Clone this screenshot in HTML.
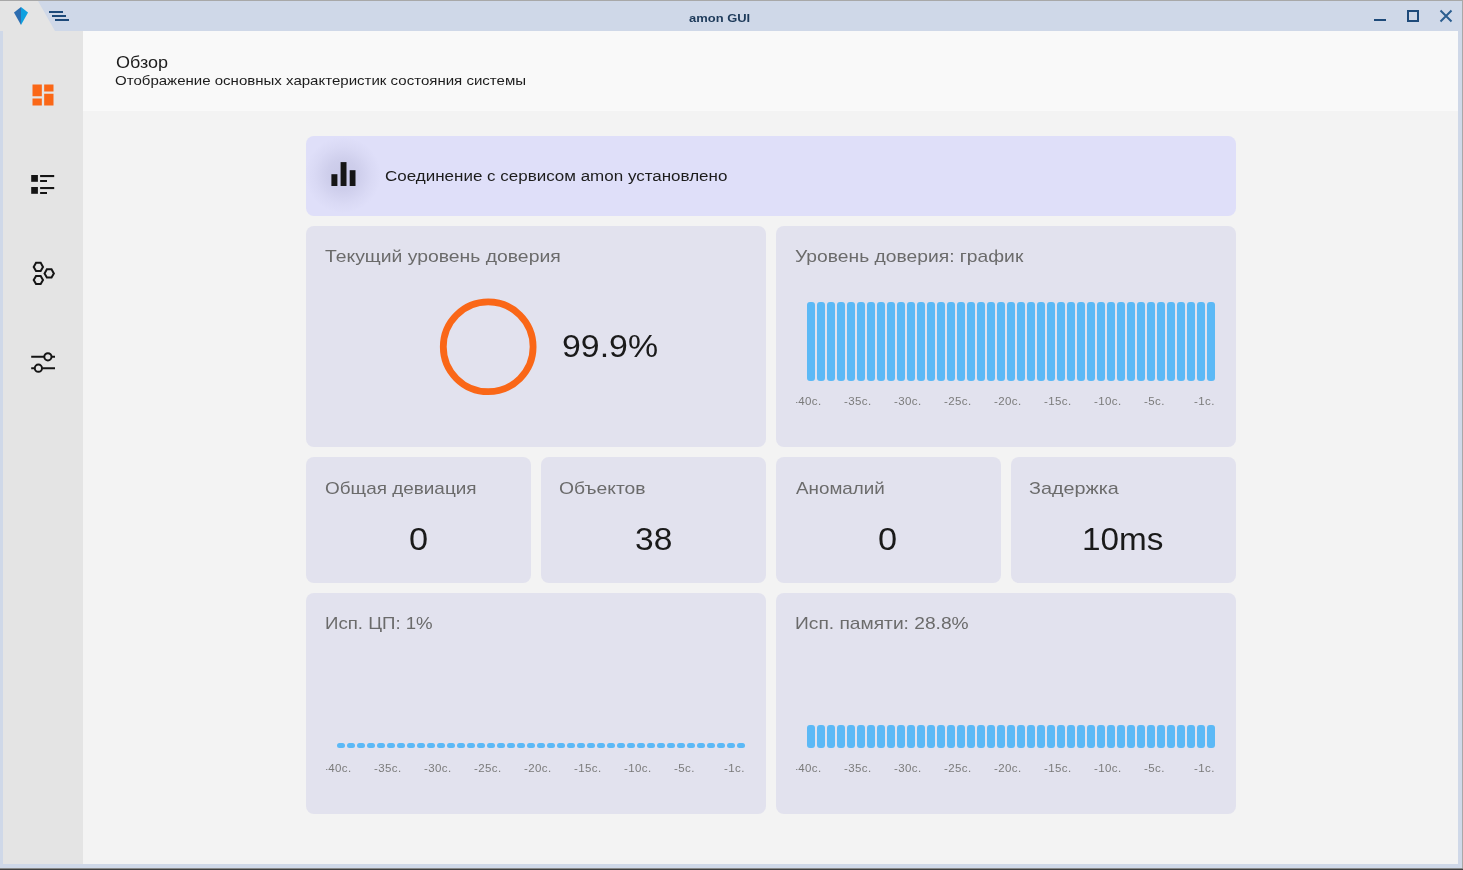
<!DOCTYPE html>
<html><head><meta charset="utf-8"><style>
*{margin:0;padding:0;box-sizing:border-box}
html,body{width:1463px;height:870px;overflow:hidden;background:#f3f3f3;font-family:"Liberation Sans",sans-serif}
.a{position:absolute}
.t{position:absolute;white-space:nowrap;transform-origin:0 0;will-change:transform}
.ax{position:absolute;white-space:nowrap;will-change:transform;font-size:11.5px;line-height:11.5px;letter-spacing:0.4px;color:#7a7a7a}
.bar{position:absolute;width:8px;background:#5cb9f6}
.card{position:absolute;background:#e2e2ee;border-radius:8px}
</style></head><body>
<!-- frame -->
<div class="a" style="left:0;top:0;width:1463px;height:870px;background:#cfd8e8"></div>
<div class="a" style="left:0;top:0;width:1463px;height:1px;background:#a8a8a8"></div>
<div class="a" style="left:1462px;top:0;width:1px;height:870px;background:#a8a8a8"></div>
<div class="a" style="left:0;top:868px;width:1463px;height:1px;background:#8a8a8a"></div>
<div class="a" style="left:0;top:869px;width:1463px;height:1px;background:#404040"></div>
<svg class="a" style="left:0;top:1px" width="70" height="30" viewBox="0 0 70 30">
 <polygon points="0,0 38,0 55,30 0,30" fill="#e4e4e4"/>
 <polygon points="21,6 14,11.5 21,24" fill="#2c6db0"/>
 <polygon points="21,6 28,11.5 21,24" fill="#0ea0e0"/>
 <rect x="49" y="10" width="14" height="2" fill="#1e4a7a"/>
 <rect x="52" y="14" width="14" height="2" fill="#1e4a7a"/>
 <rect x="55" y="18" width="14" height="2" fill="#1e4a7a"/>
</svg>
<svg class="a" style="left:1370px;top:5px" width="90" height="24" viewBox="0 0 90 24">
 <rect x="4" y="14" width="12" height="2" fill="#1e4a7a"/>
 <rect x="38" y="6" width="10" height="10" fill="none" stroke="#1e4a7a" stroke-width="2"/>
 <path d="M70.5 5.5 L81.5 16.5 M81.5 5.5 L70.5 16.5" stroke="#2a5d8f" stroke-width="2"/>
</svg>
<!-- sidebar -->
<div class="a" style="left:3px;top:31px;width:80px;height:833px;background:#e4e4e4"></div>
<!-- header -->
<div class="a" style="left:83px;top:31px;width:1375px;height:80px;background:#f9f9f9"></div>
<div class="a" style="left:83px;top:111px;width:1375px;height:753px;background:#f3f3f3"></div>
<!-- sidebar icons -->
<svg class="a" style="left:29px;top:81.4px" width="28" height="28" viewBox="0 0 24 24"><path fill="#fa6717" d="M3 13h8V3H3v10zm0 8h8v-6H3v6zm10 0h8V11h-8v10zm0-18v6h8V3h-8z"/></svg>
<svg class="a" style="left:20px;top:160px" width="50" height="50" viewBox="0 0 50 50" fill="#141414">
 <rect x="11.2" y="15" width="6.7" height="6.8"/><rect x="20.1" y="15" width="14.1" height="2.1"/><rect x="20.1" y="20" width="6.9" height="2"/>
 <rect x="11.2" y="27" width="6.7" height="6.8"/><rect x="20.1" y="27" width="14.1" height="2.1"/><rect x="20.1" y="32" width="6.9" height="2"/>
</svg>
<svg class="a" style="left:20px;top:250px" width="50" height="50" viewBox="0 0 50 50" fill="none" stroke="#141414" stroke-width="2">
 <polygon points="16.03,12.87 20.68,12.87 23.00,16.90 20.68,20.93 16.03,20.93 13.70,16.90"/>
 <polygon points="26.88,19.37 31.52,19.37 33.85,23.40 31.52,27.43 26.88,27.43 24.55,23.40"/>
 <polygon points="16.03,25.97 20.68,25.97 23.00,30.00 20.68,34.03 16.03,34.03 13.70,30.00"/>
</svg>
<svg class="a" style="left:20px;top:340px" width="50" height="50" viewBox="0 0 50 50" fill="none" stroke="#141414" stroke-width="2">
 <path d="M11.2 16.8 H24 M32 16.8 H35"/><circle cx="27.9" cy="16.8" r="3.6"/>
 <path d="M11.2 28.2 H14.5 M22.4 28.2 H35"/><circle cx="18.4" cy="28.2" r="3.6"/>
</svg>
<!-- banner -->
<div class="a" style="left:306px;top:136px;width:930px;height:80px;background:#dfdff9;border-radius:8px;overflow:hidden">
 <div class="a" style="left:-0.6px;top:1.4px;width:76px;height:76px;border-radius:50%;background:radial-gradient(circle closest-side, rgba(168,168,205,0.4) 0%, rgba(168,168,205,0.3) 40%, rgba(168,168,205,0.1) 75%, rgba(168,168,205,0) 100%)"></div>
</div>
<svg class="a" style="left:330px;top:160px" width="28" height="28" viewBox="0 0 28 28" fill="#161616">
 <rect x="1.4" y="14.2" width="6" height="11.8"/><rect x="10.6" y="2.1" width="5.9" height="23.9"/><rect x="19.7" y="10.2" width="5.8" height="15.8"/>
</svg>
<!-- cards -->
<div class="card" style="left:306px;top:226px;width:460px;height:221px"></div>
<div class="card" style="left:776px;top:226px;width:460px;height:221px"></div>
<div class="card" style="left:306px;top:457px;width:225px;height:126px"></div>
<div class="card" style="left:541px;top:457px;width:225px;height:126px"></div>
<div class="card" style="left:776px;top:457px;width:225px;height:126px"></div>
<div class="card" style="left:1011px;top:457px;width:225px;height:126px"></div>
<div class="card" style="left:306px;top:593px;width:460px;height:221px"></div>
<div class="card" style="left:776px;top:593px;width:460px;height:221px"></div>
<!-- ring -->
<svg class="a" style="left:430px;top:289px" width="116" height="116" viewBox="0 0 116 116"><circle cx="58.2" cy="57.8" r="44.9" fill="none" stroke="#fa6717" stroke-width="6.8"/></svg>
<!-- bars -->
<div class="bar" style="left:807px;top:302px;height:79px;border-radius:3px"></div><div class="bar" style="left:817px;top:302px;height:79px;border-radius:3px"></div><div class="bar" style="left:827px;top:302px;height:79px;border-radius:3px"></div><div class="bar" style="left:837px;top:302px;height:79px;border-radius:3px"></div><div class="bar" style="left:847px;top:302px;height:79px;border-radius:3px"></div><div class="bar" style="left:857px;top:302px;height:79px;border-radius:3px"></div><div class="bar" style="left:867px;top:302px;height:79px;border-radius:3px"></div><div class="bar" style="left:877px;top:302px;height:79px;border-radius:3px"></div><div class="bar" style="left:887px;top:302px;height:79px;border-radius:3px"></div><div class="bar" style="left:897px;top:302px;height:79px;border-radius:3px"></div><div class="bar" style="left:907px;top:302px;height:79px;border-radius:3px"></div><div class="bar" style="left:917px;top:302px;height:79px;border-radius:3px"></div><div class="bar" style="left:927px;top:302px;height:79px;border-radius:3px"></div><div class="bar" style="left:937px;top:302px;height:79px;border-radius:3px"></div><div class="bar" style="left:947px;top:302px;height:79px;border-radius:3px"></div><div class="bar" style="left:957px;top:302px;height:79px;border-radius:3px"></div><div class="bar" style="left:967px;top:302px;height:79px;border-radius:3px"></div><div class="bar" style="left:977px;top:302px;height:79px;border-radius:3px"></div><div class="bar" style="left:987px;top:302px;height:79px;border-radius:3px"></div><div class="bar" style="left:997px;top:302px;height:79px;border-radius:3px"></div><div class="bar" style="left:1007px;top:302px;height:79px;border-radius:3px"></div><div class="bar" style="left:1017px;top:302px;height:79px;border-radius:3px"></div><div class="bar" style="left:1027px;top:302px;height:79px;border-radius:3px"></div><div class="bar" style="left:1037px;top:302px;height:79px;border-radius:3px"></div><div class="bar" style="left:1047px;top:302px;height:79px;border-radius:3px"></div><div class="bar" style="left:1057px;top:302px;height:79px;border-radius:3px"></div><div class="bar" style="left:1067px;top:302px;height:79px;border-radius:3px"></div><div class="bar" style="left:1077px;top:302px;height:79px;border-radius:3px"></div><div class="bar" style="left:1087px;top:302px;height:79px;border-radius:3px"></div><div class="bar" style="left:1097px;top:302px;height:79px;border-radius:3px"></div><div class="bar" style="left:1107px;top:302px;height:79px;border-radius:3px"></div><div class="bar" style="left:1117px;top:302px;height:79px;border-radius:3px"></div><div class="bar" style="left:1127px;top:302px;height:79px;border-radius:3px"></div><div class="bar" style="left:1137px;top:302px;height:79px;border-radius:3px"></div><div class="bar" style="left:1147px;top:302px;height:79px;border-radius:3px"></div><div class="bar" style="left:1157px;top:302px;height:79px;border-radius:3px"></div><div class="bar" style="left:1167px;top:302px;height:79px;border-radius:3px"></div><div class="bar" style="left:1177px;top:302px;height:79px;border-radius:3px"></div><div class="bar" style="left:1187px;top:302px;height:79px;border-radius:3px"></div><div class="bar" style="left:1197px;top:302px;height:79px;border-radius:3px"></div><div class="bar" style="left:1207px;top:302px;height:79px;border-radius:3px"></div>
<div class="bar" style="left:807px;top:725px;height:23px;border-radius:3px"></div><div class="bar" style="left:817px;top:725px;height:23px;border-radius:3px"></div><div class="bar" style="left:827px;top:725px;height:23px;border-radius:3px"></div><div class="bar" style="left:837px;top:725px;height:23px;border-radius:3px"></div><div class="bar" style="left:847px;top:725px;height:23px;border-radius:3px"></div><div class="bar" style="left:857px;top:725px;height:23px;border-radius:3px"></div><div class="bar" style="left:867px;top:725px;height:23px;border-radius:3px"></div><div class="bar" style="left:877px;top:725px;height:23px;border-radius:3px"></div><div class="bar" style="left:887px;top:725px;height:23px;border-radius:3px"></div><div class="bar" style="left:897px;top:725px;height:23px;border-radius:3px"></div><div class="bar" style="left:907px;top:725px;height:23px;border-radius:3px"></div><div class="bar" style="left:917px;top:725px;height:23px;border-radius:3px"></div><div class="bar" style="left:927px;top:725px;height:23px;border-radius:3px"></div><div class="bar" style="left:937px;top:725px;height:23px;border-radius:3px"></div><div class="bar" style="left:947px;top:725px;height:23px;border-radius:3px"></div><div class="bar" style="left:957px;top:725px;height:23px;border-radius:3px"></div><div class="bar" style="left:967px;top:725px;height:23px;border-radius:3px"></div><div class="bar" style="left:977px;top:725px;height:23px;border-radius:3px"></div><div class="bar" style="left:987px;top:725px;height:23px;border-radius:3px"></div><div class="bar" style="left:997px;top:725px;height:23px;border-radius:3px"></div><div class="bar" style="left:1007px;top:725px;height:23px;border-radius:3px"></div><div class="bar" style="left:1017px;top:725px;height:23px;border-radius:3px"></div><div class="bar" style="left:1027px;top:725px;height:23px;border-radius:3px"></div><div class="bar" style="left:1037px;top:725px;height:23px;border-radius:3px"></div><div class="bar" style="left:1047px;top:725px;height:23px;border-radius:3px"></div><div class="bar" style="left:1057px;top:725px;height:23px;border-radius:3px"></div><div class="bar" style="left:1067px;top:725px;height:23px;border-radius:3px"></div><div class="bar" style="left:1077px;top:725px;height:23px;border-radius:3px"></div><div class="bar" style="left:1087px;top:725px;height:23px;border-radius:3px"></div><div class="bar" style="left:1097px;top:725px;height:23px;border-radius:3px"></div><div class="bar" style="left:1107px;top:725px;height:23px;border-radius:3px"></div><div class="bar" style="left:1117px;top:725px;height:23px;border-radius:3px"></div><div class="bar" style="left:1127px;top:725px;height:23px;border-radius:3px"></div><div class="bar" style="left:1137px;top:725px;height:23px;border-radius:3px"></div><div class="bar" style="left:1147px;top:725px;height:23px;border-radius:3px"></div><div class="bar" style="left:1157px;top:725px;height:23px;border-radius:3px"></div><div class="bar" style="left:1167px;top:725px;height:23px;border-radius:3px"></div><div class="bar" style="left:1177px;top:725px;height:23px;border-radius:3px"></div><div class="bar" style="left:1187px;top:725px;height:23px;border-radius:3px"></div><div class="bar" style="left:1197px;top:725px;height:23px;border-radius:3px"></div><div class="bar" style="left:1207px;top:725px;height:23px;border-radius:3px"></div>
<div class="bar" style="left:337px;top:743px;height:5px;border-radius:2.5px"></div><div class="bar" style="left:347px;top:743px;height:5px;border-radius:2.5px"></div><div class="bar" style="left:357px;top:743px;height:5px;border-radius:2.5px"></div><div class="bar" style="left:367px;top:743px;height:5px;border-radius:2.5px"></div><div class="bar" style="left:377px;top:743px;height:5px;border-radius:2.5px"></div><div class="bar" style="left:387px;top:743px;height:5px;border-radius:2.5px"></div><div class="bar" style="left:397px;top:743px;height:5px;border-radius:2.5px"></div><div class="bar" style="left:407px;top:743px;height:5px;border-radius:2.5px"></div><div class="bar" style="left:417px;top:743px;height:5px;border-radius:2.5px"></div><div class="bar" style="left:427px;top:743px;height:5px;border-radius:2.5px"></div><div class="bar" style="left:437px;top:743px;height:5px;border-radius:2.5px"></div><div class="bar" style="left:447px;top:743px;height:5px;border-radius:2.5px"></div><div class="bar" style="left:457px;top:743px;height:5px;border-radius:2.5px"></div><div class="bar" style="left:467px;top:743px;height:5px;border-radius:2.5px"></div><div class="bar" style="left:477px;top:743px;height:5px;border-radius:2.5px"></div><div class="bar" style="left:487px;top:743px;height:5px;border-radius:2.5px"></div><div class="bar" style="left:497px;top:743px;height:5px;border-radius:2.5px"></div><div class="bar" style="left:507px;top:743px;height:5px;border-radius:2.5px"></div><div class="bar" style="left:517px;top:743px;height:5px;border-radius:2.5px"></div><div class="bar" style="left:527px;top:743px;height:5px;border-radius:2.5px"></div><div class="bar" style="left:537px;top:743px;height:5px;border-radius:2.5px"></div><div class="bar" style="left:547px;top:743px;height:5px;border-radius:2.5px"></div><div class="bar" style="left:557px;top:743px;height:5px;border-radius:2.5px"></div><div class="bar" style="left:567px;top:743px;height:5px;border-radius:2.5px"></div><div class="bar" style="left:577px;top:743px;height:5px;border-radius:2.5px"></div><div class="bar" style="left:587px;top:743px;height:5px;border-radius:2.5px"></div><div class="bar" style="left:597px;top:743px;height:5px;border-radius:2.5px"></div><div class="bar" style="left:607px;top:743px;height:5px;border-radius:2.5px"></div><div class="bar" style="left:617px;top:743px;height:5px;border-radius:2.5px"></div><div class="bar" style="left:627px;top:743px;height:5px;border-radius:2.5px"></div><div class="bar" style="left:637px;top:743px;height:5px;border-radius:2.5px"></div><div class="bar" style="left:647px;top:743px;height:5px;border-radius:2.5px"></div><div class="bar" style="left:657px;top:743px;height:5px;border-radius:2.5px"></div><div class="bar" style="left:667px;top:743px;height:5px;border-radius:2.5px"></div><div class="bar" style="left:677px;top:743px;height:5px;border-radius:2.5px"></div><div class="bar" style="left:687px;top:743px;height:5px;border-radius:2.5px"></div><div class="bar" style="left:697px;top:743px;height:5px;border-radius:2.5px"></div><div class="bar" style="left:707px;top:743px;height:5px;border-radius:2.5px"></div><div class="bar" style="left:717px;top:743px;height:5px;border-radius:2.5px"></div><div class="bar" style="left:727px;top:743px;height:5px;border-radius:2.5px"></div><div class="bar" style="left:737px;top:743px;height:5px;border-radius:2.5px"></div>
<!-- axis labels -->
<div class="a" style="left:796px;top:385px;width:440px;height:30px;overflow:hidden"><div class="a" style="left:-796px;top:-385px"><div class="ax" style="left:794.00px;top:396.00px">-40с.</div><div class="ax" style="left:844.00px;top:396.00px">-35с.</div><div class="ax" style="left:894.00px;top:396.00px">-30с.</div><div class="ax" style="left:944.00px;top:396.00px">-25с.</div><div class="ax" style="left:994.00px;top:396.00px">-20с.</div><div class="ax" style="left:1044.00px;top:396.00px">-15с.</div><div class="ax" style="left:1094.00px;top:396.00px">-10с.</div><div class="ax" style="left:1144.00px;top:396.00px">-5с.</div><div class="ax" style="left:1194.00px;top:396.00px">-1с.</div></div></div>
<div class="a" style="left:326px;top:752px;width:440px;height:30px;overflow:hidden"><div class="a" style="left:-326px;top:-752px"><div class="ax" style="left:324.00px;top:762.80px">-40с.</div><div class="ax" style="left:374.00px;top:762.80px">-35с.</div><div class="ax" style="left:424.00px;top:762.80px">-30с.</div><div class="ax" style="left:474.00px;top:762.80px">-25с.</div><div class="ax" style="left:524.00px;top:762.80px">-20с.</div><div class="ax" style="left:574.00px;top:762.80px">-15с.</div><div class="ax" style="left:624.00px;top:762.80px">-10с.</div><div class="ax" style="left:674.00px;top:762.80px">-5с.</div><div class="ax" style="left:724.00px;top:762.80px">-1с.</div></div></div>
<div class="a" style="left:796px;top:752px;width:440px;height:30px;overflow:hidden"><div class="a" style="left:-796px;top:-752px"><div class="ax" style="left:794.00px;top:762.80px">-40с.</div><div class="ax" style="left:844.00px;top:762.80px">-35с.</div><div class="ax" style="left:894.00px;top:762.80px">-30с.</div><div class="ax" style="left:944.00px;top:762.80px">-25с.</div><div class="ax" style="left:994.00px;top:762.80px">-20с.</div><div class="ax" style="left:1044.00px;top:762.80px">-15с.</div><div class="ax" style="left:1094.00px;top:762.80px">-10с.</div><div class="ax" style="left:1144.00px;top:762.80px">-5с.</div><div class="ax" style="left:1194.00px;top:762.80px">-1с.</div></div></div>
<!-- texts -->
<div class="t" style="left:689.00px;top:12.71px;font-size:11.5px;line-height:11.5px;font-weight:bold;color:#1d3a5a;transform:scaleX(1.126);letter-spacing:0.0px">amon GUI</div><div class="t" style="left:115.50px;top:54.00px;font-size:17.0px;line-height:17.0px;font-weight:normal;color:#1c1c1c;transform:scaleX(1.0585);letter-spacing:0.0px">Обзор</div><div class="t" style="left:115.00px;top:73.71px;font-size:13.5px;line-height:13.5px;font-weight:normal;color:#1c1c1c;transform:scaleX(1.1134);letter-spacing:0.0px">Отображение основных характеристик состояния системы</div><div class="t" style="left:385.00px;top:167.81px;font-size:15.5px;line-height:15.5px;font-weight:normal;color:#1c1c1c;transform:scaleX(1.0958);letter-spacing:0.0px">Соединение с сервисом amon установлено</div><div class="t" style="left:324.85px;top:248.00px;font-size:17.0px;line-height:17.0px;font-weight:normal;color:#6b6b6b;transform:scaleX(1.1385);letter-spacing:0.0px">Текущий уровень доверия</div><div class="t" style="left:794.50px;top:248.00px;font-size:17.0px;line-height:17.0px;font-weight:normal;color:#6b6b6b;transform:scaleX(1.133);letter-spacing:0.0px">Уровень доверия: график</div><div class="t" style="left:562.00px;top:331.01px;font-size:31.0px;line-height:31.0px;font-weight:normal;color:#1a1a1a;transform:scaleX(1.0932);letter-spacing:0.0px">99.9%</div><div class="t" style="left:325.00px;top:479.61px;font-size:17.0px;line-height:17.0px;font-weight:normal;color:#6b6b6b;transform:scaleX(1.1134);letter-spacing:0.0px">Общая девиация</div><div class="t" style="left:559.00px;top:479.61px;font-size:17.0px;line-height:17.0px;font-weight:normal;color:#6b6b6b;transform:scaleX(1.1361);letter-spacing:0.0px">Объектов</div><div class="t" style="left:796.00px;top:479.61px;font-size:17.0px;line-height:17.0px;font-weight:normal;color:#6b6b6b;transform:scaleX(1.1064);letter-spacing:0.0px">Аномалий</div><div class="t" style="left:1029.00px;top:479.61px;font-size:17.0px;line-height:17.0px;font-weight:normal;color:#6b6b6b;transform:scaleX(1.1632);letter-spacing:0.0px">Задержка</div><div class="t" style="left:408.50px;top:524.01px;font-size:31.0px;line-height:31.0px;font-weight:normal;color:#1a1a1a;transform:scaleX(1.1081);letter-spacing:0.0px">0</div><div class="t" style="left:634.50px;top:524.01px;font-size:31.0px;line-height:31.0px;font-weight:normal;color:#1a1a1a;transform:scaleX(1.0819);letter-spacing:0.0px">38</div><div class="t" style="left:877.50px;top:524.01px;font-size:31.0px;line-height:31.0px;font-weight:normal;color:#1a1a1a;transform:scaleX(1.1081);letter-spacing:0.0px">0</div><div class="t" style="left:1081.50px;top:524.01px;font-size:31.0px;line-height:31.0px;font-weight:normal;color:#1a1a1a;transform:scaleX(1.074);letter-spacing:0.0px">10ms</div><div class="t" style="left:325.00px;top:615.41px;font-size:17.0px;line-height:17.0px;font-weight:normal;color:#6b6b6b;transform:scaleX(1.097);letter-spacing:0.0px">Исп. ЦП: 1%</div><div class="t" style="left:795.00px;top:615.41px;font-size:17.0px;line-height:17.0px;font-weight:normal;color:#6b6b6b;transform:scaleX(1.1289);letter-spacing:0.0px">Исп. памяти: 28.8%</div>
</body></html>
